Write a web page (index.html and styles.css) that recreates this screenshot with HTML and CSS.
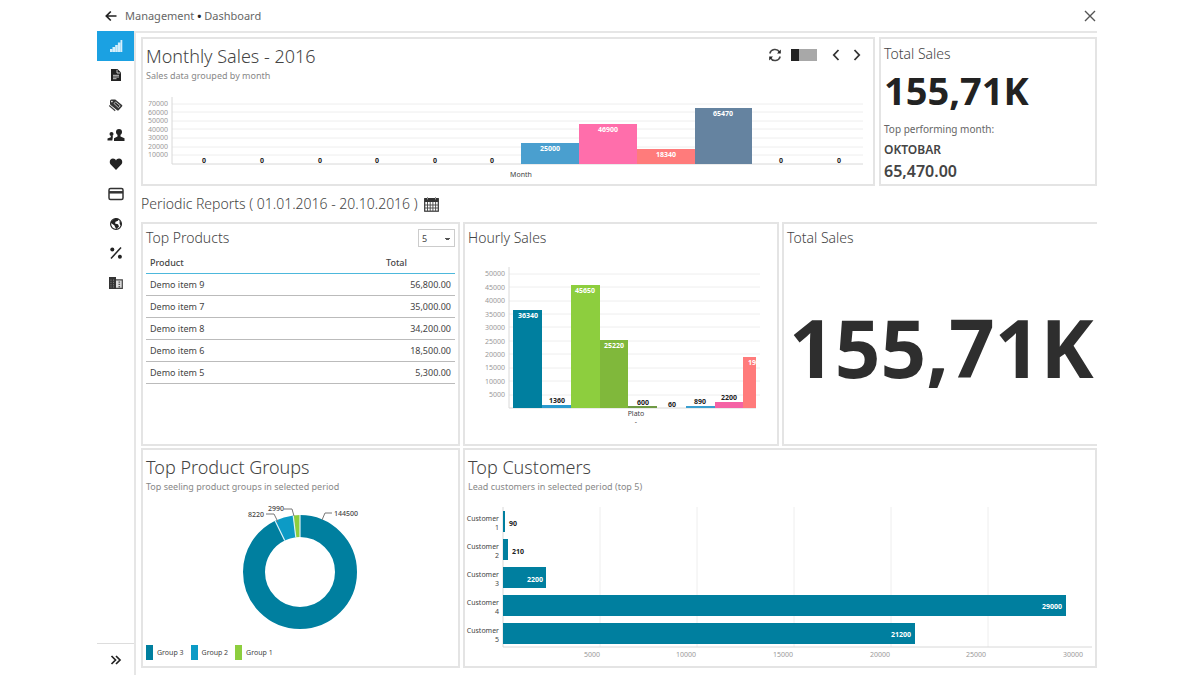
FILE: index.html
```html
<!DOCTYPE html>
<html lang="en">
<head>
<meta charset="utf-8">
<title>Management - Dashboard</title>
<link rel="stylesheet" href="styles.css">
</head>
<body>
<div class="app">
  <header class="topbar">
    <button class="icon-btn" type="button" aria-label="Back">
      <svg width="12" height="12" viewBox="0 0 12 12"><path d="M11.500 6H1.500M5.800 1.500L1.300 6l4.500 4.500" fill="none" stroke="#222" stroke-width="1.700"/></svg>
    </button>
    <span class="crumbs">Management <b>•</b> Dashboard</span>
    <button class="icon-btn close" type="button" aria-label="Close">
      <svg width="12" height="12" viewBox="0 0 12 12"><path d="M1 1l10 10M11 1L1 11" fill="none" stroke="#555" stroke-width="1.400"/></svg>
    </button>
  </header>

  <nav class="sidebar" aria-label="Sections">
    <div class="nav-list">
      <a class="nav-item active" href="#" aria-label="Dashboard"><svg width="14" height="14" viewBox="0 0 14 14" fill="#d5effb"><path d="M1 13v-3h2.300v3zM3.500 13V8H6v5zM6.200 13V6h2.500v7zM8.900 13V3.500h2.400V13zM11.500 13V1h1.800v12z"/></svg></a>
      <a class="nav-item" href="#" aria-label="Documents"><svg width="14" height="14" viewBox="0 0 14 14"><path d="M2 1h6.500L12 4.500V13H2z" fill="#222"/><path d="M8 1.800V5h3.200M4 7.300h6M4 9h6M4 10.700h3.500" fill="none" stroke="#ddd" stroke-width=".9"/></svg></a>
      <a class="nav-item" href="#" aria-label="Products"><svg width="16" height="14" viewBox="0 0 16 14"><path d="M2 3q0-1.500 1.500-1.500h3.800L14 7q.8.800 0 1.600l-3.300 3.600q-.8.700-1.600 0L2.600 7Q2 6.500 2 5.800z" fill="#333"/><path d="M6 5.500l4.500 4.200 1.700-1.900-4.600-3.900z" fill="none" stroke="#ddd" stroke-width=".8"/><circle cx="3.900" cy="3.600" r=".8" fill="#fff"/><path d="M1.200 7.500l6 5.300" stroke="#444" stroke-width="1.200"/></svg></a>
      <a class="nav-item" href="#" aria-label="Customers"><svg width="18" height="14" viewBox="0 0 18 14" fill="#222"><circle cx="12" cy="4" r="3"/><path d="M10.500 6h3v2.500l4 1.700V13H7v-2.800l3.500-1.700z"/><circle cx="4.500" cy="6" r="2"/><path d="M3.800 7.500h2v2l-.5 3H.5v-2l3.300-1.300z"/></svg></a>
      <a class="nav-item" href="#" aria-label="Favourites"><svg width="14" height="14" viewBox="0 0 14 14"><path d="M7 13L1.500 7.200C-.2 4.800 1.200 1.600 4 1.600c1.400 0 2.400.7 3 1.800.6-1.100 1.600-1.800 3-1.800 2.800 0 4.200 3.200 2.500 5.600z" fill="#222"/></svg></a>
      <a class="nav-item" href="#" aria-label="Payments"><svg width="16" height="14" viewBox="0 0 16 14"><rect x="1" y="1.500" width="14" height="11" rx="1.500" fill="none" stroke="#333" stroke-width="1.500"/><path d="M1 5.300h14" stroke="#333" stroke-width="2.500"/></svg></a>
      <a class="nav-item" href="#" aria-label="Countries"><svg width="14" height="14" viewBox="0 0 14 14"><circle cx="7" cy="7" r="5.400" fill="#fff" stroke="#222" stroke-width="1.200"/><path d="M2 4.500L6.500 1.300l3 .5-.5 2-2.500 1L6 6.500l3 .8 1 2.200L7.500 12 6 10 5.500 8.500 2 6z" fill="#222"/><path d="M10.500 4l2 2-.3 3-1.500-2z" fill="#222"/></svg></a>
      <a class="nav-item" href="#" aria-label="Discounts"><svg width="14" height="14" viewBox="0 0 14 14"><circle cx="3.300" cy="3.500" r="2" fill="#222"/><circle cx="10.900" cy="10.700" r="2" fill="#222"/><path d="M12 1.500L2 12.500" stroke="#222" stroke-width="1.500"/></svg></a>
      <a class="nav-item" href="#" aria-label="Company"><svg width="14" height="14" viewBox="0 0 14 14"><path d="M0 1h7v12H0z" fill="#333"/><path d="M2 3.500v8M4.500 3.500v8" stroke="#777" stroke-dasharray="1.300 1"/><path d="M7 3.800h6.300v8.600H7" fill="#ddd" stroke="#444" stroke-width="1.200"/><path d="M10.300 5.500v6" stroke="#555" stroke-width="1.600" stroke-dasharray="1.300 1"/></svg></a>
    </div>
    <button class="nav-toggle" type="button" aria-label="Expand menu">
      <svg width="12" height="10" viewBox="0 0 12 10"><path d="M1.500 1l4 4-4 4M6 1l4 4-4 4" fill="none" stroke="#222" stroke-width="1.700"/></svg>
    </button>
  </nav>

  <main class="content">
    <div class="row row-top">
      <section class="card">
        <div class="card-head">
          <div class="headings">
            <h2 class="title large">Monthly Sales - 2016</h2>
            <p class="subtitle">Sales data grouped by month</p>
          </div>
          <div class="tools">
            <button class="icon-btn" type="button" aria-label="Refresh"><svg width="14" height="14" viewBox="0 0 14 14" fill="none" stroke="#444" stroke-width="1.500"><path d="M1.800 5.500A5.300 5.300 0 0 1 11.500 4M12.200 8.500A5.300 5.300 0 0 1 2.500 10"/><path d="M12.800 1.500v4H9zM1.200 12.500v-4H5z" fill="#222" stroke="none"/></svg></button>
            <label class="switch"><input type="checkbox" aria-label="Show chart"></label>
            <button class="icon-btn prev" type="button" aria-label="Previous year"><svg width="8" height="12" viewBox="0 0 8 12"><path d="M6.500 1L1.800 6l4.700 5" fill="none" stroke="#333" stroke-width="1.800"/></svg></button>
            <button class="icon-btn" type="button" aria-label="Next year"><svg width="8" height="12" viewBox="0 0 8 12"><path d="M1.500 1l4.700 5-4.700 5" fill="none" stroke="#333" stroke-width="1.800"/></svg></button>
          </div>
        </div>
        <svg class="chart" viewBox="0 0 730 98" role="img" aria-label="Monthly sales">
          <path class="grid" d="M29 18H720M29 26H720M29 35H720M29 43H720M29 52H720M29 61H720M29 69H720"/>
          <path class="axis" d="M29 11V78H720"/>
          <g class="tick end">
            <text x="25" y="20">70000</text><text x="25" y="29">60000</text><text x="25" y="37">50000</text><text x="25" y="46">40000</text><text x="25" y="54">30000</text><text x="25" y="63">20000</text><text x="25" y="71">10000</text>
          </g>
          <rect x="378" y="57" width="58" height="21" fill="#4a9fcf"/>
          <rect x="436" y="38" width="58" height="40" fill="#ff6eab"/>
          <rect x="494" y="63" width="58" height="15" fill="#ff7b7b"/>
          <rect x="552" y="22" width="57" height="56" fill="#6583a0"/>
          <g class="val mid">
            <text x="61" y="77">0</text><text x="119" y="77">0</text><text x="177" y="77">0</text><text x="234" y="77">0</text><text x="292" y="77">0</text><text x="349" y="77">0</text><text x="638" y="77">0</text><text x="696" y="77">0</text>
          </g>
          <g class="val mid light">
            <text x="407" y="65">25000</text><text x="465" y="46">46900</text><text x="523" y="71">18340</text><text x="580" y="30">65470</text>
          </g>
          <text class="axis-name mid" x="378" y="91">Month</text>
        </svg>
      </section>

      <section class="card summary">
        <h2 class="title small">Total Sales</h2>
        <p class="total">155,71K</p>
        <p class="note">Top performing month:</p>
        <p class="month">OKTOBAR</p>
        <p class="amount">65,470.00</p>
      </section>
    </div>

    <div class="period">
      <h1 class="title">Periodic Reports ( 01.01.2016 - 20.10.2016 )</h1>
      <button class="icon-btn" type="button" aria-label="Choose period"><svg width="15" height="15" viewBox="0 0 15 15"><rect x=".7" y="1.700" width="13.600" height="12.500" fill="#fff" stroke="#333" stroke-width="1.200"/><path d="M.7 1h13.600v4H.7z" fill="#333"/><path d="M3.500 5v9M6.200 5v9M8.900 5v9M11.600 5v9M1 8h13M1 11h13" stroke="#444" stroke-width=".9"/><path d="M3.500 0v2.500M11.500 0v2.500" stroke="#999"/></svg></button>
    </div>

    <div class="row row-mid">
      <section class="card">
        <div class="card-head short">
          <h2 class="title">Top Products</h2>
          <select class="count" aria-label="Number of products"><option>5</option><option>10</option></select>
        </div>
        <table class="products">
          <thead><tr><th>Product</th><th class="total-head">Total</th></tr></thead>
          <tbody>
            <tr><td>Demo item 9</td><td>56,800.00</td></tr>
            <tr><td>Demo item 7</td><td>35,000.00</td></tr>
            <tr><td>Demo item 8</td><td>34,200.00</td></tr>
            <tr><td>Demo item 6</td><td>18,500.00</td></tr>
            <tr><td>Demo item 5</td><td>5,300.00</td></tr>
          </tbody>
        </table>
      </section>

      <section class="card">
        <div class="card-head short"><h2 class="title">Hourly Sales</h2></div>
        <svg class="chart" viewBox="0 0 312 188" role="img" aria-label="Hourly sales">
          <path class="grid" d="M44 18H295M44 31H295M44 45H295M44 58H295M44 71H295M44 85H295M44 98H295M44 112H295M44 125H295M44 139H295"/>
          <path class="axis" d="M44 11V152H291"/>
          <g class="tick end">
            <text x="40" y="20">50000</text><text x="40" y="34">45000</text><text x="40" y="47">40000</text><text x="40" y="61">35000</text><text x="40" y="74">30000</text><text x="40" y="88">25000</text><text x="40" y="101">20000</text><text x="40" y="114">15000</text><text x="40" y="128">10000</text><text x="40" y="141">5000</text>
          </g>
          <rect x="48" y="54" width="29" height="98" fill="#007f9f"/>
          <rect x="77" y="149" width="29" height="3" fill="#2a9bd0"/>
          <rect x="106" y="29" width="29" height="123" fill="#8dce3e"/>
          <rect x="135" y="84" width="28" height="68" fill="#80b83b"/>
          <rect x="163" y="150" width="29" height="2" fill="#6f9a45"/>
          <rect x="221" y="150" width="29" height="2" fill="#3a9fd0"/>
          <rect x="250" y="146" width="28" height="6" fill="#f562a5"/>
          <rect x="278" y="101" width="13" height="51" fill="#ff7b7b"/>
          <g class="val mid light">
            <text x="63" y="62">36340</text><text x="120" y="37">45650</text><text x="149" y="92">25220</text>
          </g>
          <svg x="278" y="101" width="13" height="20"><text class="val light" x="5" y="8">19000</text></svg>
          <g class="val mid">
            <text x="92" y="147">1360</text><text x="178" y="149">600</text><text x="207" y="151">60</text><text x="235" y="148">890</text><text x="264" y="144">2200</text>
          </g>
          <text class="axis-name mid" x="171" y="160">Plato</text>
          <text class="axis-name mid" x="171" y="168">-</text>
        </svg>
      </section>

      <section class="card clipped">
        <div class="card-head short"><h2 class="title small">Total Sales</h2></div>
        <p class="huge">155,71K</p>
      </section>
    </div>

    <div class="row row-bottom">
      <section class="card">
        <div class="card-head">
          <div class="headings">
            <h2 class="title large">Top Product Groups</h2>
            <p class="subtitle">Top seeling product groups in selected period</p>
          </div>
        </div>
        <svg class="chart" viewBox="0 0 315 142" role="img" aria-label="Top product groups">
          <g fill="none" stroke-width="22" transform="rotate(-90 157 75)">
            <circle cx="157" cy="75" r="46" stroke="#007f9f" pathLength="155710" stroke-dasharray="144500 11210"/>
            <circle cx="157" cy="75" r="46" stroke="#0c9bc6" pathLength="155710" stroke-dasharray="8220 147490" stroke-dashoffset="-144500"/>
            <circle cx="157" cy="75" r="46" stroke="#8dce3e" pathLength="155710" stroke-dasharray="2990 152720" stroke-dashoffset="-152720"/>
          </g>
          <path d="M157 40V18M152.800 40.200L150.200 18.400M141.700 43.500L132.100 23.700" stroke="#d8f0f8" stroke-width="1.200"/>
          <path class="leader" d="M179 23L182 16H189M123 17H131L135 25M141 12H149L151 19"/>
          <text class="val plain" x="191" y="19">144500</text>
          <text class="val plain" x="105" y="20">8220</text>
          <text class="val plain" x="125" y="14">2990</text>
        </svg>
        <ul class="legend">
          <li><span class="swatch g3"></span>Group 3</li>
          <li><span class="swatch g2"></span>Group 2</li>
          <li><span class="swatch g1"></span>Group 1</li>
        </ul>
      </section>

      <section class="card">
        <div class="card-head">
          <div class="headings">
            <h2 class="title large">Top Customers</h2>
            <p class="subtitle">Lead customers in selected period (top 5)</p>
          </div>
        </div>
        <svg class="chart" viewBox="0 0 630 169" role="img" aria-label="Top customers">
          <path class="grid" d="M135 10V150M232 10V150M329 10V150M426 10V150M523 10V150"/>
          <path class="axis" d="M38 10V150H627"/>
          <g fill="#007f9f">
            <rect x="38" y="14" width="2" height="21"/>
            <rect x="38" y="42" width="5" height="21"/>
            <rect x="38" y="70" width="43" height="21"/>
            <rect x="38" y="98" width="563" height="21"/>
            <rect x="38" y="126" width="412" height="21"/>
          </g>
          <g class="axis-name end">
            <text x="34" y="24">Customer</text><text x="34" y="33">1</text>
            <text x="34" y="52">Customer</text><text x="34" y="61">2</text>
            <text x="34" y="80">Customer</text><text x="34" y="89">3</text>
            <text x="34" y="108">Customer</text><text x="34" y="117">4</text>
            <text x="34" y="136">Customer</text><text x="34" y="145">5</text>
          </g>
          <text class="val" x="44" y="29">90</text>
          <text class="val" x="47" y="57">210</text>
          <g class="val end light">
            <text x="78" y="85">2200</text><text x="597" y="112">29000</text><text x="446" y="140">21200</text>
          </g>
          <g class="tick end">
            <text x="135" y="160">5000</text><text x="231" y="160">10000</text><text x="328" y="160">15000</text><text x="425" y="160">20000</text><text x="521" y="160">25000</text><text x="618" y="160">30000</text>
          </g>
        </svg>
      </section>
    </div>
  </main>
</div>
</body>
</html>
```
FILE: styles.css
```css
* { box-sizing: border-box; }

body {
  margin: 0;
  padding: 0 103px 0 97px;
  background: #fff;
  color: #444;
  font-family: "Noto Sans", "Open Sans", sans-serif;
}

h1, h2, p, ul { margin: 0; padding: 0; }

.app {
  display: grid;
  grid-template-columns: 39px minmax(0, 1fr);
  grid-template-rows: auto 1fr;
  min-height: 100vh;
}

.topbar {
  grid-column: 1 / -1;
  display: flex;
  align-items: center;
  gap: 8px;
  height: 31px;
  padding: 0 1px 0 8px;
}

.crumbs { font-size: 11px; color: #666; }
.crumbs b { color: #222; }

.icon-btn {
  display: inline-flex;
  padding: 0;
  border: 0;
  background: none;
  cursor: pointer;
}

.close { margin-left: auto; }

.sidebar {
  display: flex;
  flex-direction: column;
  justify-content: space-between;
  border-right: 2px solid #e6e6e6;
}

.nav-list {
  display: grid;
  grid-template-rows: repeat(9, 1fr);
  height: 267px;
}

.nav-item {
  display: flex;
  align-items: center;
  justify-content: center;
}

.nav-item.active { background: #1ba1e2; }

.nav-toggle {
  display: flex;
  align-items: center;
  justify-content: center;
  height: 32px;
  padding: 0;
  border: 0;
  border-top: 1px solid #ddd;
  background: none;
}

.content {
  border-top: 2px solid #e6e6e6;
  padding: 4px 0 7px 5px;
}

.row { display: grid; }
.row-top { grid-template-columns: 734fr 218fr; gap: 4px; }
.row-mid { grid-template-columns: 319fr 316fr 315fr; gap: 3px; }
.row-bottom { grid-template-columns: 319fr 634fr; gap: 3px; margin-top: 2px; }

.card {
  min-width: 0;
  border: 2px solid #e4e4e4;
  background: #fff;
}

.card.clipped { border-right: 0; }

.card-head {
  display: flex;
  justify-content: space-between;
  height: 47px;
  padding: 6px 3px 0;
}

.card-head.short { height: 32px; padding-top: 4px; }

.title {
  font-size: 14px;
  line-height: 20px;
  font-weight: 300;
  color: #444;
}

.title.large { font-size: 18px; line-height: 22px; }

.subtitle { font-size: 9px; line-height: 18px; color: #888; }

.tools {
  display: flex;
  align-items: center;
  gap: 13px;
  height: 20px;
  padding-right: 9px;
}

.tools .switch { margin-left: -4px; }
.tools .prev { margin-left: 2px; }

.switch { display: flex; }

.switch input {
  appearance: none;
  width: 26px;
  height: 12px;
  margin: 0;
  background: linear-gradient(90deg, #222 8px, #a8a8a8 8px);
}

.chart { display: block; width: 100%; height: auto; }
.chart text { font-size: 7px; }
.grid { fill: none; stroke: #eee; }
.axis { fill: none; stroke: #d8d8d8; }
.leader { fill: none; stroke: #777; }
.tick { fill: #999; }
.axis-name { fill: #444; }
.val { fill: #222; font-weight: 700; }
.val.light { fill: #fff; }
.val.plain { fill: #444; font-weight: 500; }
.mid { text-anchor: middle; }
.end { text-anchor: end; }

.summary { padding: 5px 3px 0; }
.total { font-size: 38px; line-height: 52px; font-weight: 700; color: #222; }
.note { font-size: 10px; line-height: 26px; color: #666; }
.month { font-size: 12px; line-height: 16px; font-weight: 600; }
.amount { font-size: 16px; line-height: 26px; font-weight: 600; }

.period {
  display: flex;
  align-items: center;
  gap: 6px;
  height: 36px;
}

.count {
  appearance: none;
  width: 37px;
  height: 18px;
  margin-top: 1px;
  padding: 0 3px;
  border: 1px solid #ccc;
  border-radius: 0;
  background: linear-gradient(#555, #555) 26px 8px / 5px 1px no-repeat, linear-gradient(#555, #555) 27px 9px / 3px 1px no-repeat, #fff;
  color: #444;
  font: 9px "Noto Sans", sans-serif;
}

.products {
  width: calc(100% - 6px);
  margin: -4px 3px 0;
  border-collapse: separate;
  border-spacing: 0;
  font-size: 9px;
  line-height: 20px;
}

.products th { height: 22px; padding: 0 4px; border-bottom: 1px solid #4db8dc; font-weight: 500; text-align: left; }
.products td { height: 22px; padding: 0 4px; border-bottom: 1px solid #bbb; }
.products td:last-child { text-align: right; }
.products .total-head { width: 73px; }

.huge {
  font-size: 80px;
  line-height: 182px;
  font-weight: 700;
  color: #2e2e2e;
  white-space: nowrap;
  overflow: hidden;
  padding-left: 5px;
}

.legend {
  display: flex;
  align-items: center;
  gap: 7px;
  padding: 0 3px;
  list-style: none;
  font-size: 7px;
  line-height: 27px;
}

.legend li { display: flex; align-items: center; gap: 4px; }
.swatch { width: 7px; height: 15px; }
.g3 { background: #007f9f; }
.g2 { background: #0c9bc6; }
.g1 { background: #8dce3e; }
```
